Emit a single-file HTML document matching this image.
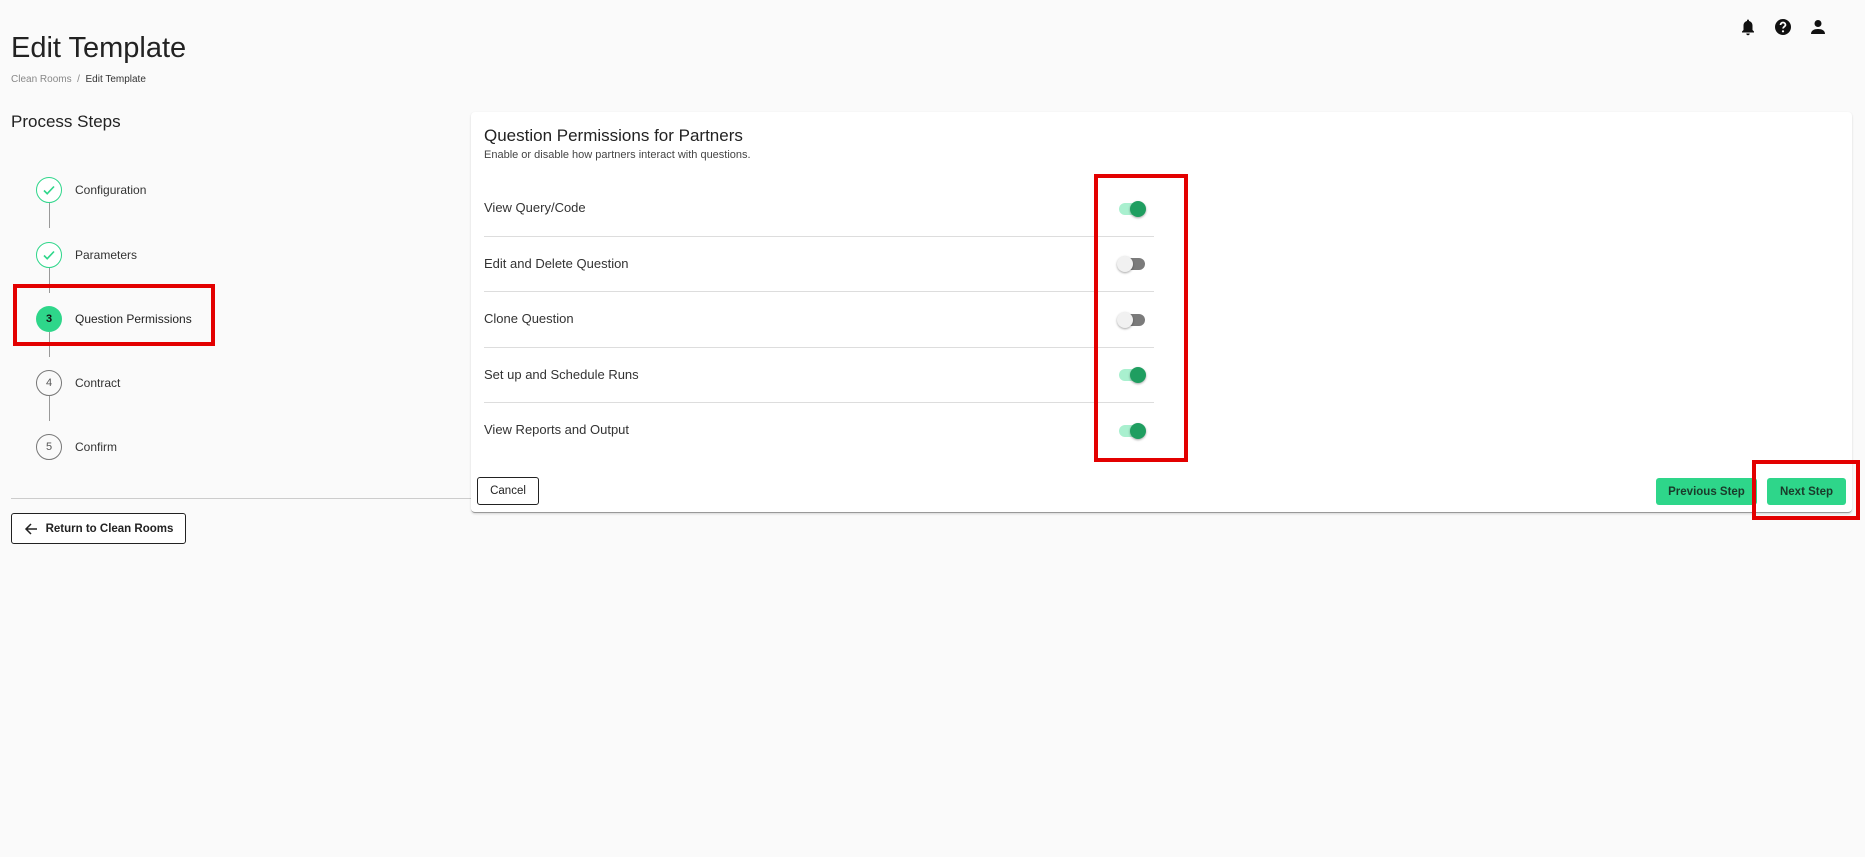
<!DOCTYPE html>
<html><head><meta charset="utf-8"><style>
*{box-sizing:border-box;margin:0;padding:0}
body{width:1865px;height:857px;background:#fafafa;font-family:"Liberation Sans","DejaVu Sans",sans-serif;color:#222;position:relative;overflow:hidden}
.a{position:absolute}
.circ{position:absolute;width:26px;height:26px;border-radius:50%;left:36px;display:flex;align-items:center;justify-content:center;font-size:11px}
.done{border:1.5px solid #2ed68a;background:#fff}
.todo{border:1.5px solid #777;color:#555;background:#fafafa}
.lbl{position:absolute;left:75px;font-size:12px;color:#333}
.vl{position:absolute;left:49px;width:1px;background:#999}
.row{position:absolute;left:484px;font-size:13px;color:#333}
.div{position:absolute;left:484px;width:670px;height:1px;background:#ddd}
.tg{position:absolute;left:1119px;width:26px;height:12px;border-radius:6px}
.tg i{position:absolute;top:-2px;width:16px;height:16px;border-radius:50%;box-shadow:0 1px 2px rgba(0,0,0,.35)}
.on{background:#a9f0cf}.on i{right:-1px;background:#1f9e60}
.off{background:#7b7b7b}.off i{left:-2px;background:#f1f1f1}
.btn{position:absolute;font-size:11.5px;display:flex;align-items:center;justify-content:center;border-radius:3px}
.red{position:absolute;border:4px solid #e30000}
</style></head><body>
<div class="a" style="left:11px;top:32px;font-size:29px;color:#222">Edit Template</div>
<div class="a" style="left:11px;top:74px;font-size:10px;color:#888">Clean Rooms &nbsp;/&nbsp; <span style="color:#333">Edit Template</span></div>
<div class="a" style="left:11px;top:112px;font-size:17px;color:#222">Process Steps</div>

<div class="vl" style="top:203px;height:25px"></div>
<div class="vl" style="top:268px;height:25px"></div>
<div class="vl" style="top:332px;height:25px"></div>
<div class="vl" style="top:396px;height:25px"></div>
<div class="circ done" style="top:177px"><svg width="14" height="14" viewBox="0 0 14 14"><path d="M2 7.5l3.2 3.2L12 3.5" fill="none" stroke="#2ed68a" stroke-width="1.6"/></svg></div>
<div class="lbl" style="top:183px">Configuration</div>
<div class="circ done" style="top:242px"><svg width="14" height="14" viewBox="0 0 14 14"><path d="M2 7.5l3.2 3.2L12 3.5" fill="none" stroke="#2ed68a" stroke-width="1.6"/></svg></div>
<div class="lbl" style="top:248px">Parameters</div>
<div class="circ" style="top:306px;background:#2ed68a;color:#111;font-weight:bold">3</div>
<div class="lbl" style="top:312px;color:#222">Question Permissions</div>
<div class="circ todo" style="top:370px">4</div>
<div class="lbl" style="top:376px">Contract</div>
<div class="circ todo" style="top:434px">5</div>
<div class="lbl" style="top:440px">Confirm</div>
<div class="red" style="left:13px;top:284px;width:202px;height:62px"></div>

<div class="a" style="left:11px;top:498px;width:460px;height:1px;background:#ccc"></div>
<div class="btn" style="left:11px;top:513px;width:175px;height:31px;border:1.5px solid #222;background:#fff;color:#222;font-weight:bold">
<svg width="14" height="14" viewBox="0 0 14 14" style="margin-right:8px"><path d="M13 7H2M7 2L2 7l5 5" fill="none" stroke="#222" stroke-width="1.5"/></svg>Return to Clean Rooms</div>

<div class="a" style="left:471px;top:112px;width:1381px;height:401px;background:#fff;border-radius:4px;box-shadow:0 1px 2px rgba(0,0,0,.15);border-bottom:1.5px solid #999"></div>
<div class="a" style="left:484px;top:126px;font-size:17px;color:#222">Question Permissions for Partners</div>
<div class="a" style="left:484px;top:149px;font-size:11px;color:#444">Enable or disable how partners interact with questions.</div>

<div class="row" style="top:200px">View Query/Code</div>
<div class="div" style="top:236px"></div>
<div class="row" style="top:256px">Edit and Delete Question</div>
<div class="div" style="top:291px"></div>
<div class="row" style="top:311px">Clone Question</div>
<div class="div" style="top:347px"></div>
<div class="row" style="top:367px">Set up and Schedule Runs</div>
<div class="div" style="top:402px"></div>
<div class="row" style="top:422px">View Reports and Output</div>

<div class="tg on" style="top:203px"><i></i></div>
<div class="tg off" style="top:258px"><i></i></div>
<div class="tg off" style="top:314px"><i></i></div>
<div class="tg on" style="top:369px"><i></i></div>
<div class="tg on" style="top:425px"><i></i></div>
<div class="red" style="left:1094px;top:174px;width:94px;height:288px"></div>

<div class="btn" style="left:477px;top:477px;width:62px;height:28px;border:1.5px solid #222;background:#fff;color:#222">Cancel</div>
<div class="btn" style="left:1656px;top:478px;width:101px;height:27px;background:#2ed68a;color:#1a3a2a;font-weight:bold">Previous Step</div>
<div class="btn" style="left:1767px;top:478px;width:79px;height:27px;background:#2ed68a;color:#1a3a2a;font-weight:bold">Next Step</div>
<div class="red" style="left:1752px;top:460px;width:108px;height:60px"></div>

<svg class="a" style="left:1740px;top:18px" width="16" height="18" viewBox="0 0 16 18"><path d="M8 1.5c-.6 0-1 .4-1 1v.5C4.8 3.5 3.5 5.3 3.5 7.5V12L2 13.5V14.5h12v-1L12.5 12V7.5c0-2.2-1.3-4-3.5-4.5v-.5c0-.6-.4-1-1-1zM6.3 15.5a1.7 1.7 0 003.4 0z" fill="#111"/></svg>
<svg class="a" style="left:1774px;top:18px" width="18" height="18" viewBox="0 0 18 18"><circle cx="9" cy="9" r="8" fill="#111"/><path d="M6.5 7a2.5 2.5 0 115 0c0 1.6-2.5 1.8-2.5 3.5" fill="none" stroke="#fff" stroke-width="1.8"/><circle cx="9" cy="13.3" r="1.1" fill="#fff"/></svg>
<svg class="a" style="left:1810px;top:18px" width="16" height="18" viewBox="0 0 16 18"><circle cx="8" cy="5.5" r="3.5" fill="#111"/><path d="M1 16c0-3.5 3-5 7-5s7 1.5 7 5z" fill="#111"/></svg>
</body></html>
